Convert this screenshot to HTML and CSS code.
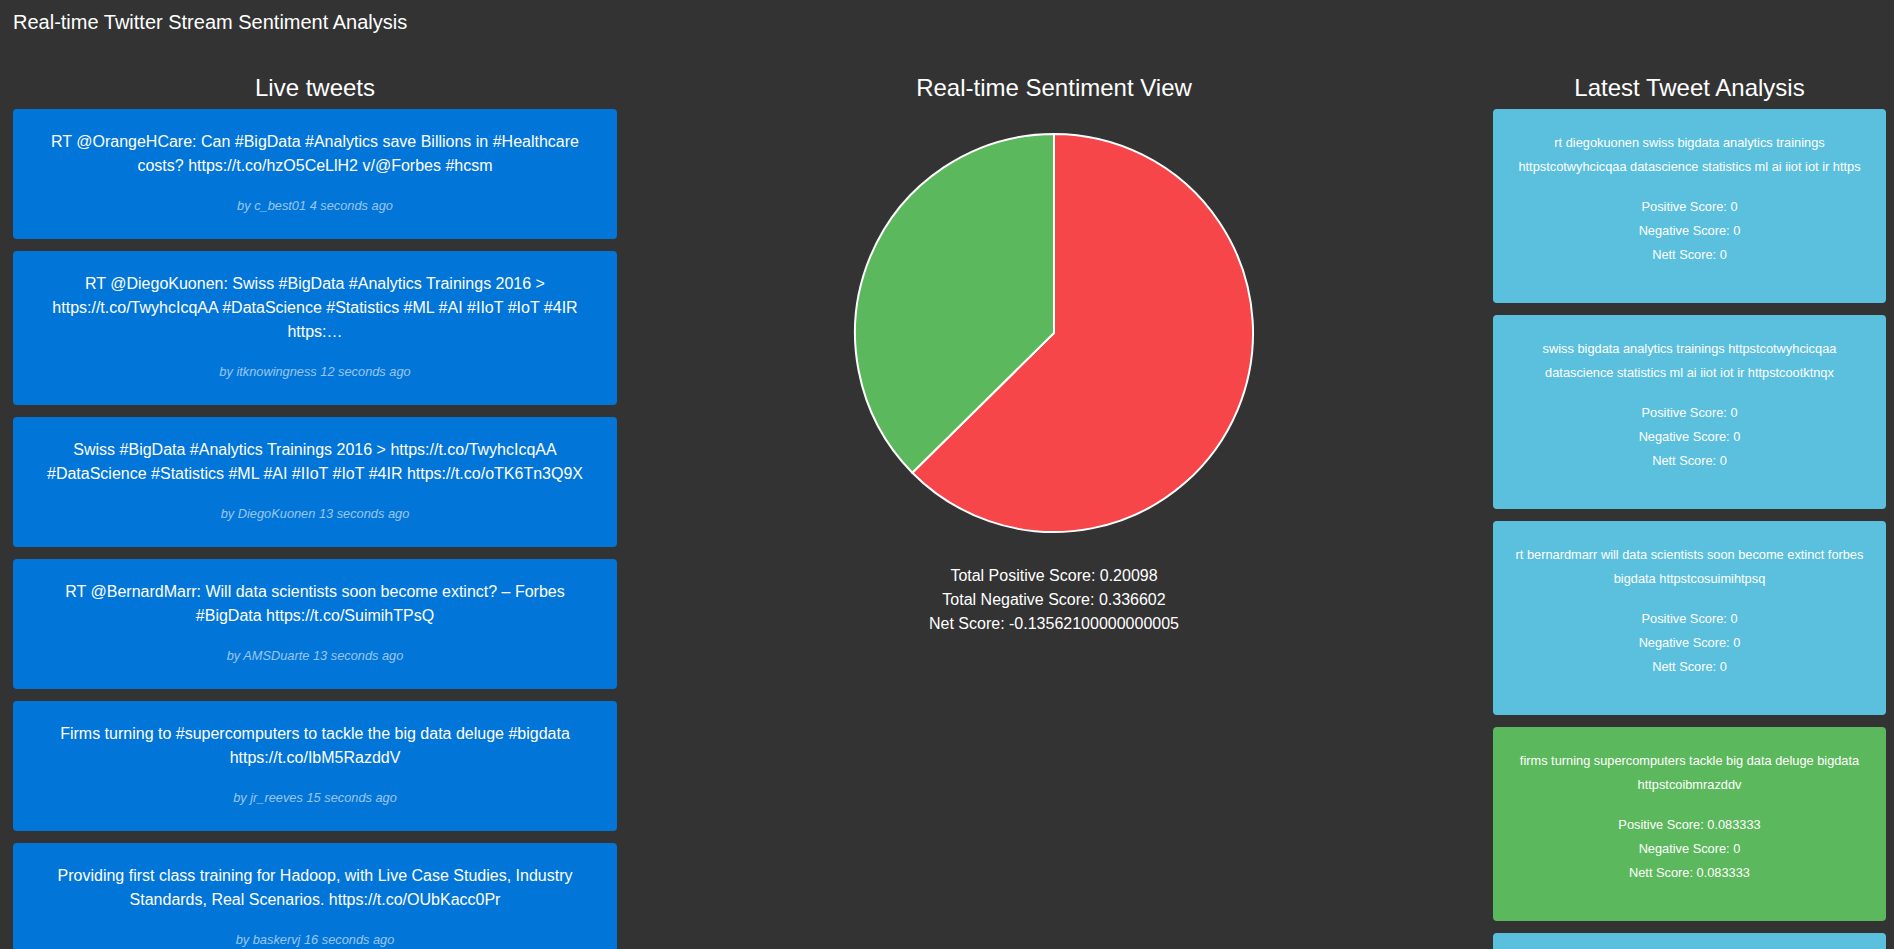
FILE: index.html
```html
<!DOCTYPE html>
<html lang="en">
<head>
<meta charset="utf-8">
<title>Real-time Twitter Stream Sentiment Analysis</title>
<link rel="stylesheet" href="styles.css">
</head>
<body>
<header class="topbar">Real-time Twitter Stream Sentiment Analysis</header>
<main class="layout">
  <section class="col col-left">
    <h3 class="col-title">Live tweets</h3>
    <div class="tweet">
      <p class="tweet-text">RT @OrangeHCare: Can #BigData #Analytics save Billions in #Healthcare costs? https://t.co/hzO5CeLlH2 v/@Forbes #hcsm</p>
      <p class="tweet-meta">by c_best01 4 seconds ago</p>
    </div>
    <div class="tweet">
      <p class="tweet-text">RT @DiegoKuonen: Swiss #BigData #Analytics Trainings 2016 &gt; https://t.co/TwyhcIcqAA #DataScience #Statistics #ML #AI #IIoT #IoT #4IR https:…</p>
      <p class="tweet-meta">by itknowingness 12 seconds ago</p>
    </div>
    <div class="tweet">
      <p class="tweet-text">Swiss #BigData #Analytics Trainings 2016 &gt; https://t.co/TwyhcIcqAA #DataScience #Statistics #ML #AI #IIoT #IoT #4IR https://t.co/oTK6Tn3Q9X</p>
      <p class="tweet-meta">by DiegoKuonen 13 seconds ago</p>
    </div>
    <div class="tweet">
      <p class="tweet-text">RT @BernardMarr: Will data scientists soon become extinct? – Forbes #BigData https://t.co/SuimihTPsQ</p>
      <p class="tweet-meta">by AMSDuarte 13 seconds ago</p>
    </div>
    <div class="tweet">
      <p class="tweet-text">Firms turning to #supercomputers to tackle the big data deluge #bigdata https://t.co/IbM5RazddV</p>
      <p class="tweet-meta">by jr_reeves 15 seconds ago</p>
    </div>
    <div class="tweet">
      <p class="tweet-text">Providing first class training for Hadoop, with Live Case Studies, Industry Standards, Real Scenarios. https://t.co/OUbKacc0Pr</p>
      <p class="tweet-meta">by baskervj 16 seconds ago</p>
    </div>
  </section>

  <section class="col col-mid">
    <h3 class="col-title">Real-time Sentiment View</h3>
    <div class="chart">
      <svg class="pie" width="402" height="402" viewBox="0 0 402 402">
        <path d="M201 201 L201 2 A199 199 0 1 1 59.3 340.7 Z" fill="#f7464a" stroke="#ffffff" stroke-width="2" stroke-linejoin="round"/>
        <path d="M201 201 L59.3 340.7 A199 199 0 0 1 201 2 Z" fill="#5cb85c" stroke="#ffffff" stroke-width="2" stroke-linejoin="round"/>
      </svg>
    </div>
    <div class="totals">
      <div>Total Positive Score: 0.20098</div>
      <div>Total Negative Score: 0.336602</div>
      <div>Net Score: -0.13562100000000005</div>
    </div>
  </section>

  <section class="col col-right">
    <h3 class="col-title">Latest Tweet Analysis</h3>
    <div class="analysis">
      <div class="analysis-text">rt diegokuonen swiss bigdata analytics trainings httpstcotwyhcicqaa datascience statistics ml ai iiot iot ir https</div>
      <div>Positive Score: 0</div>
      <div>Negative Score: 0</div>
      <div>Nett Score: 0</div>
    </div>
    <div class="analysis">
      <div class="analysis-text">swiss bigdata analytics trainings httpstcotwyhcicqaa datascience statistics ml ai iiot iot ir httpstcootktnqx</div>
      <div>Positive Score: 0</div>
      <div>Negative Score: 0</div>
      <div>Nett Score: 0</div>
    </div>
    <div class="analysis">
      <div class="analysis-text">rt bernardmarr will data scientists soon become extinct forbes bigdata httpstcosuimihtpsq</div>
      <div>Positive Score: 0</div>
      <div>Negative Score: 0</div>
      <div>Nett Score: 0</div>
    </div>
    <div class="analysis analysis-positive">
      <div class="analysis-text">firms turning supercomputers tackle big data deluge bigdata httpstcoibmrazddv</div>
      <div>Positive Score: 0.083333</div>
      <div>Negative Score: 0</div>
      <div>Nett Score: 0.083333</div>
    </div>
    <div class="analysis">
      <div class="analysis-text">providing first class training hadoop live case studies industry standards real scenarios httpstcooubkaccpr</div>
      <div>Positive Score: 0</div>
      <div>Negative Score: 0</div>
      <div>Nett Score: 0</div>
    </div>
  </section>
</main>
</body>
</html>
```
FILE: styles.css
```css
html {
  overflow: hidden;
}

body {
  margin: 0;
  background: #333333;
  color: #ffffff;
  font-family: "Liberation Sans", Arial, sans-serif;
  font-size: 16px;
  line-height: 24px;
}

.topbar {
  padding: 10px 13px 6px;
  font-size: 20px;
  line-height: 24px;
}

.layout {
  display: flex;
  align-items: flex-start;
  padding: 0 8px 0 13px;
}

.col-left {
  width: 604px;
  flex: none;
}

.col-mid {
  flex: 1;
  padding-right: 2px;
}

.col-right {
  width: 393px;
  flex: none;
}

.col-title {
  margin: 34px 0 7px;
  font-size: 24px;
  line-height: 28px;
  font-weight: normal;
  text-align: center;
}

.tweet {
  background: #0275d8;
  border-radius: 4px;
  padding: 21px 20px;
  margin-bottom: 12px;
  text-align: center;
}

.tweet-text {
  margin: 0 0 16px;
  font-size: 16px;
  line-height: 24px;
}

.tweet-meta {
  margin: 0;
  font-size: 12.8px;
  line-height: 24px;
  font-style: italic;
  color: rgba(255, 255, 255, 0.6);
}

.chart {
  padding-top: 23px;
  display: flex;
  justify-content: center;
}

.pie {
  display: block;
}

.totals {
  margin-top: 30px;
  text-align: center;
  font-size: 16px;
  line-height: 24px;
}

.analysis {
  background: #5bc0de;
  border-radius: 4px;
  padding: 22px 18px 36px;
  margin-bottom: 12px;
  text-align: center;
  font-size: 12.8px;
  line-height: 24px;
}

.analysis-positive {
  background: #5cb85c;
}

.analysis-text {
  margin-bottom: 16px;
}
```
